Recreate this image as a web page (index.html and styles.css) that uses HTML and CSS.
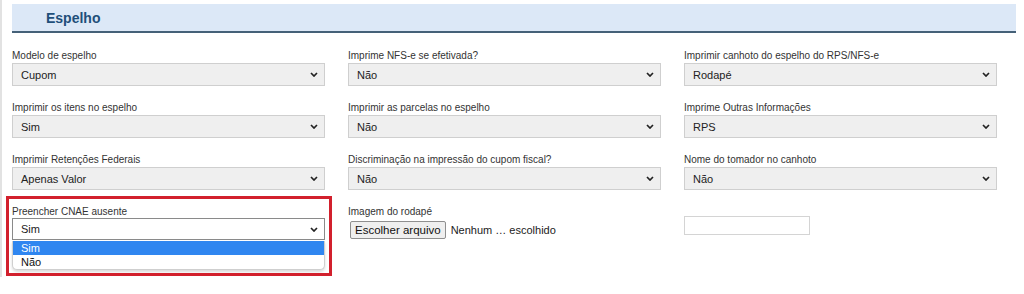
FILE: index.html
```html
<!DOCTYPE html>
<html lang="pt-BR">
<head>
  <meta charset="UTF-8" />
  <title>Espelho</title>
  <link rel="stylesheet" href="styles.css">
</head>
<body>
  <div class="page">
    <div class="section-head">
      <h2>Espelho</h2>
    </div>

    <div class="fields">
      <div class="field">
        <label>Modelo de espelho</label>
        <div class="select"><span>Cupom</span><svg width="8" height="5" viewBox="0 0 8 5"><path d="M1 1 L4 4 L7 1" /></svg></div>
      </div>
      <div class="field">
        <label>Imprime NFS-e se efetivada?</label>
        <div class="select"><span>Não</span><svg width="8" height="5" viewBox="0 0 8 5"><path d="M1 1 L4 4 L7 1" /></svg></div>
      </div>
      <div class="field">
        <label>Imprimir canhoto do espelho do RPS/NFS-e</label>
        <div class="select"><span>Rodapé</span><svg width="8" height="5" viewBox="0 0 8 5"><path d="M1 1 L4 4 L7 1" /></svg></div>
      </div>

      <div class="field">
        <label>Imprimir os itens no espelho</label>
        <div class="select"><span>Sim</span><svg width="8" height="5" viewBox="0 0 8 5"><path d="M1 1 L4 4 L7 1" /></svg></div>
      </div>
      <div class="field">
        <label>Imprimir as parcelas no espelho</label>
        <div class="select"><span>Não</span><svg width="8" height="5" viewBox="0 0 8 5"><path d="M1 1 L4 4 L7 1" /></svg></div>
      </div>
      <div class="field">
        <label>Imprime Outras Informações</label>
        <div class="select"><span>RPS</span><svg width="8" height="5" viewBox="0 0 8 5"><path d="M1 1 L4 4 L7 1" /></svg></div>
      </div>

      <div class="field">
        <label>Imprimir Retenções Federais</label>
        <div class="select"><span>Apenas Valor</span><svg width="8" height="5" viewBox="0 0 8 5"><path d="M1 1 L4 4 L7 1" /></svg></div>
      </div>
      <div class="field">
        <label>Discriminação na impressão do cupom fiscal?</label>
        <div class="select"><span>Não</span><svg width="8" height="5" viewBox="0 0 8 5"><path d="M1 1 L4 4 L7 1" /></svg></div>
      </div>
      <div class="field">
        <label>Nome do tomador no canhoto</label>
        <div class="select"><span>Não</span><svg width="8" height="5" viewBox="0 0 8 5"><path d="M1 1 L4 4 L7 1" /></svg></div>
      </div>

      <div class="field highlighted">
        <label>Preencher CNAE ausente</label>
        <div class="select open"><span>Sim</span><svg width="8" height="5" viewBox="0 0 8 5"><path d="M1 1 L4 4 L7 1" /></svg></div>
        <ul class="options">
          <li class="active">Sim</li>
          <li>Não</li>
        </ul>
        <div class="mark"></div>
      </div>
      <div class="field">
        <label>Imagem do rodapé</label>
        <div class="file">
          <button type="button">Escolher arquivo</button>
          <span>Nenhum … escolhido</span>
        </div>
      </div>
      <div class="field">
        <label>&nbsp;</label>
        <input type="text" class="text-input" />
      </div>
    </div>
  </div>
</body>
</html>
```

FILE: styles.css
```css
html, body {
  margin: 0;
  padding: 0;
  background: #fff;
  font-family: "Liberation Sans", Arial, sans-serif;
  color: #222;
}

.page {
  border-left: 2px solid #e2e2e2;
  height: 277px;
  padding-top: 4px;
  box-sizing: border-box;
}

.section-head {
  margin-left: 10px;
  width: 1004px;
  height: 29px;
  background: #dce8f7;
  border-bottom: 2px solid #456178;
  box-sizing: border-box;
  display: flex;
  align-items: center;
  padding-left: 34px;
}

.section-head h2 {
  margin: 0;
  font-size: 14px;
  font-weight: bold;
  color: #1f4f7a;
}

.fields {
  display: grid;
  grid-template-columns: repeat(3, 313px);
  column-gap: 23px;
  row-gap: 13px;
  margin: 14px 0 0 10px;
}

.field {
  position: relative;
}

.field label {
  display: block;
  font-size: 10px;
  line-height: 14px;
  padding-top: 2px;
  color: #333;
  white-space: nowrap;
}

.select {
  height: 23px;
  box-sizing: border-box;
  border: 1px solid #cfcfcf;
  background: #efefef;
  display: flex;
  align-items: center;
  justify-content: space-between;
  padding: 0 6px 0 8px;
  font-size: 11px;
  color: #222;
}

.select svg path {
  fill: none;
  stroke: #222;
  stroke-width: 1.7;
}

.select.open {
  background: #fff;
  border-color: #8a8a8a;
  height: 22px;
  margin-top: -1px;
}

.options {
  position: absolute;
  left: 0;
  right: 0;
  top: 38px;
  margin: 0;
  padding: 0;
  list-style: none;
  background: #fff;
  border: 1px solid #cfcfcf;
  border-top: none;
  border-radius: 0 0 5px 5px;
  box-shadow: 0 2px 3px rgba(0, 0, 0, 0.15);
  font-size: 11px;
  overflow: hidden;
}

.options li {
  height: 14px;
  line-height: 14px;
  padding-left: 8px;
  color: #111;
}

.options li.active {
  background: #2f86f0;
  color: #fff;
}

.mark {
  position: absolute;
  left: -6px;
  top: -7px;
  width: 326px;
  height: 80px;
  border: 3px solid #d2202d;
  box-sizing: border-box;
}

.file {
  display: flex;
  align-items: center;
  gap: 5px;
  padding-left: 2px;
  margin-top: 2px;
}

.file button {
  height: 18px;
  padding: 0 4px;
  font-family: "Liberation Sans", Arial, sans-serif;
  font-size: 11.5px;
  background: #efefef;
  border: 1px solid #8f8f8f;
  border-radius: 2px;
  color: #111;
}

.file span {
  font-size: 11px;
  color: #222;
}

.text-input {
  display: block;
  width: 126px;
  height: 19px;
  box-sizing: border-box;
  margin-top: -3px;
  border: 1px solid #d4d4d4;
  background: #fff;
}
```
